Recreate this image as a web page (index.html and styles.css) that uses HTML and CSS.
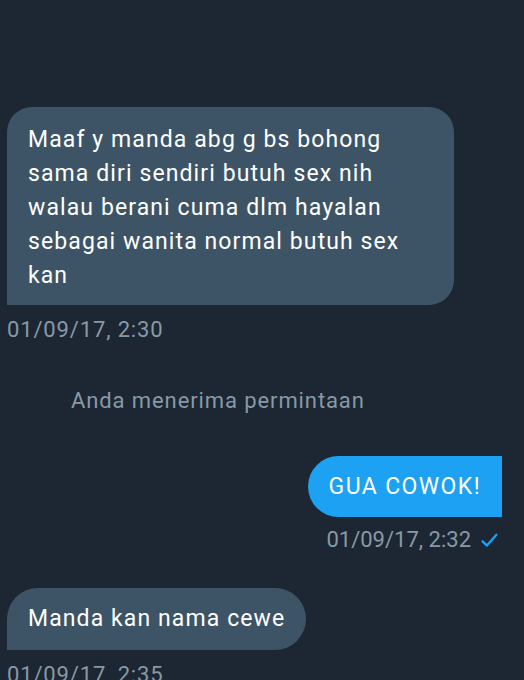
FILE: index.html
```html
<!DOCTYPE html>
<html lang="id">
<head>
<meta charset="utf-8">
<title>Pesan</title>
<link rel="stylesheet" href="styles.css">
</head>
<body>
<main class="chat">
  <div class="msg msg-in">
    <div class="bubble bubble-in bubble-tall">Maaf y manda abg g bs bohong<br>sama diri sendiri butuh sex nih<br>walau berani cuma dlm hayalan<br>sebagai wanita normal butuh sex<br>kan</div>
    <div class="time">01/09/17, 2:30</div>
  </div>
  <div class="notice">Anda menerima permintaan</div>
  <div class="msg msg-out">
    <div class="bubble bubble-out">GUA COWOK!</div>
    <div class="time time-out">01/09/17, 2:32
      <svg class="check" viewBox="0 0 16 16" width="16" height="16" aria-hidden="true"><path d="M1.5 8.8 L5.6 12.8 L14.5 2.5" fill="none" stroke="#1da1f2" stroke-width="2.2" stroke-linecap="round" stroke-linejoin="round"/></svg>
    </div>
  </div>
  <div class="msg msg-in msg-last">
    <div class="bubble bubble-in">Manda kan nama cewe</div>
    <div class="time">01/09/17, 2:35</div>
  </div>
</main>
</body>
</html>
```
FILE: styles.css
```css
html, body {
  margin: 0;
  padding: 0;
  background: #1c2733;
  height: 100%;
  overflow: hidden;
}
body {
  font-family: Roboto, "Noto Sans", sans-serif;
  color: #ffffff;
}
.chat {
  display: flex;
  flex-direction: column;
  padding: 107px 22px 0 7px;
}
.msg {
  display: flex;
  flex-direction: column;
  align-items: flex-start;
}
.msg-out {
  align-items: flex-end;
  margin-top: 42px;
}
.msg-last {
  margin-top: 35px;
}
.bubble {
  font-size: 23px;
  letter-spacing: 1.1px;
  line-height: 34px;
  padding: 14px 21px;
}
.bubble-in {
  background: #3d5466;
  border-radius: 31px 31px 31px 0;
}
.bubble-tall {
  border-radius: 25px 25px 25px 0;
  padding: 16px 55px 12px 21px;
}
.bubble-out {
  background: #1da1f2;
  border-radius: 31px 0 0 31px;
  padding: 14px 21px 13px 21px;
  letter-spacing: 1.4px;
}
.time {
  font-size: 22px;
  letter-spacing: 0.85px;
  line-height: 26px;
  color: #8899a6;
  margin-top: 12px;
}
.time-out {
  display: flex;
  align-items: center;
  gap: 10px;
  letter-spacing: 0;
  margin-top: 10px;
  margin-right: 4px;
}
.check {
  width: 17px;
  height: 17px;
}
.notice {
  font-size: 22px;
  letter-spacing: 0.9px;
  line-height: 26px;
  color: #8899a6;
  padding-left: 64px;
  margin-top: 45px;
}
```
